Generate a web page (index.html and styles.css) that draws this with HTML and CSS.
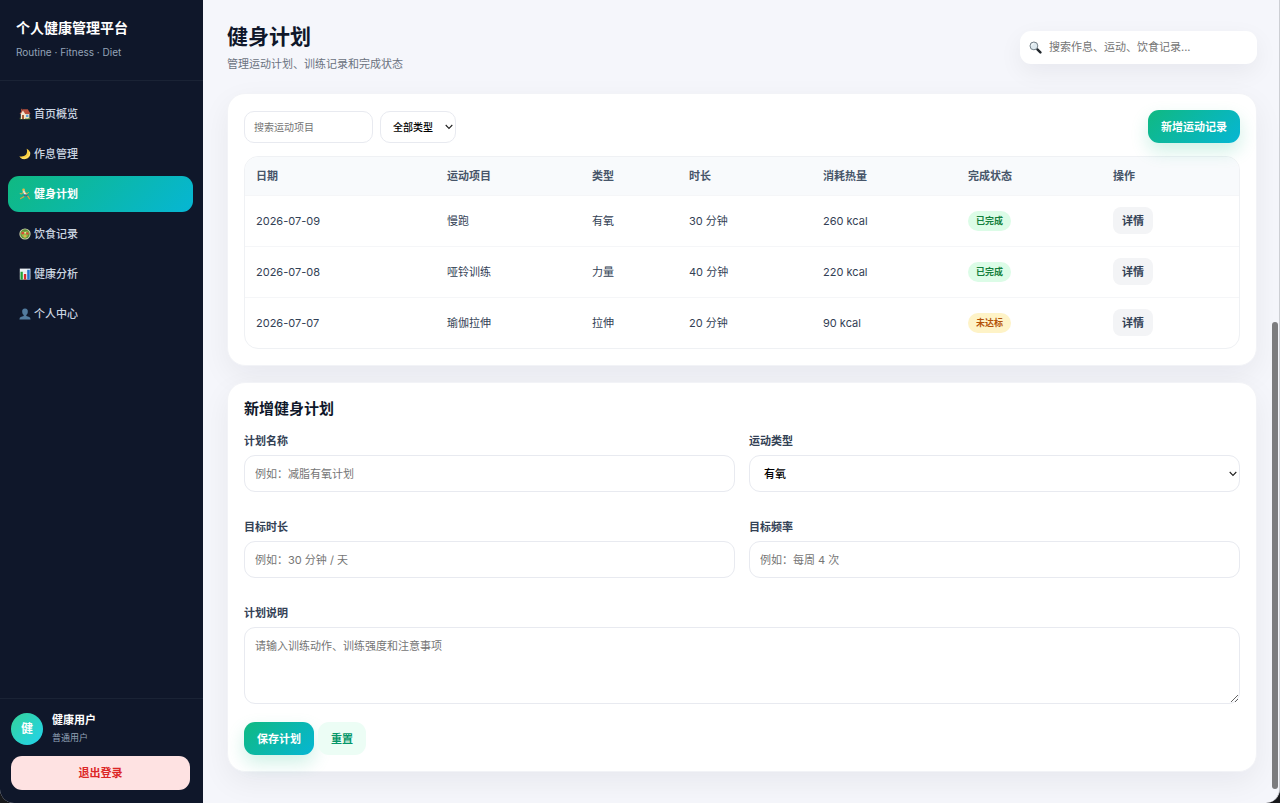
FILE: index.html
```html
<!DOCTYPE html>
<html lang="zh-CN">
<head>
  <meta charset="UTF-8">
  <meta name="viewport" content="width=device-width, initial-scale=1.0">
  <title>健身计划 - 个人健康管理平台</title>
  <link rel="stylesheet" href="styles.css">
</head>
<body>
  <div class="app">
    <aside class="sidebar">
      <div class="brand">
        <div class="brand-title">个人健康管理平台</div>
        <div class="brand-sub">Routine · Fitness · Diet</div>
      </div>

      <nav class="nav">
        <a href="#home" class="nav-item">
          <svg class="nav-icon" viewBox="0 0 12 12">
            <rect x="2" y="5" width="8.4" height="6" fill="#f0dfc0"/>
            <path d="M0.6 6 L3.8 1.2 H8.8 L11.6 6 Z" fill="#b9503c"/>
            <rect x="2" y="0.8" width="1.4" height="3" fill="#9b4a3b"/>
            <path d="M3.9 2.6 L1.8 6 V11 H6.2 V6 Z" fill="#f3e4cd"/>
            <rect x="3" y="7" width="2" height="4" fill="#a65f35"/>
            <rect x="7" y="6.7" width="2.4" height="2.3" fill="#5aa5d8"/>
            <path d="M0.8 11.3 H11.4 V9.8 H9.8 L9.2 10.5 H6 V11 H2 L1.7 9.8 H0.8 Z" fill="#668d35"/>
          </svg>
          <span>首页概览</span>
        </a>
        <a href="#routine" class="nav-item">
          <svg class="nav-icon" viewBox="0 0 12 12">
            <path d="M7.6 0.8 C13 3.1 12.2 9.8 6.8 11 C4 11.6 1.4 10.4 0.4 8.2 C6.2 9.6 9.3 5.6 7.6 0.8 Z" fill="#f8ce3f"/>
            <path d="M10.6 4 C11 8 8 10.5 3 10.3" fill="none" stroke="#fce98a" stroke-width="0.8"/>
          </svg>
          <span>作息管理</span>
        </a>
        <a href="#fitness" class="nav-item active">
          <svg class="nav-icon" viewBox="0 0 12 12">
            <circle cx="4.6" cy="1.9" r="1.4" fill="#e9b94d"/>
            <path d="M4.8 3.6 L6.8 6.6" stroke="#e7edf0" stroke-width="2.2" stroke-linecap="round"/>
            <path d="M4.4 4 L2.6 6 L1.2 5.6 M6 4.4 L8 5.6 L9.4 4.6" fill="none" stroke="#e5ad49" stroke-width="1" stroke-linecap="round"/>
            <path d="M6.6 6.8 L4.8 8.8 L1.6 10.6 M6.8 6.8 L9 8.4 L10.4 10.8" fill="none" stroke="#d89f47" stroke-width="1.2" stroke-linecap="round"/>
            <path d="M6.4 6.6 L5.2 8.2 M7 6.8 L8.4 8" stroke="#3b6b8e" stroke-width="1.7"/>
          </svg>
          <span>健身计划</span>
        </a>
        <a href="#diet" class="nav-item">
          <svg class="nav-icon" viewBox="0 0 12 12">
            <circle cx="6" cy="6" r="5.6" fill="#d2d5ae"/>
            <circle cx="6" cy="6" r="4.7" fill="#5d9139"/>
            <path d="M2 5 Q4 2 6 4 Q8 1.5 10 5 L8 9 Q5 11 3 8 Z" fill="#8fbd48"/>
            <circle cx="3.8" cy="5.2" r="1.4" fill="#d64d35"/>
            <circle cx="8.4" cy="5.5" r="1.3" fill="#d64d35"/>
            <circle cx="6" cy="8.3" r="1.3" fill="#e4ad50"/>
            <circle cx="6.2" cy="4.7" r="0.9" fill="#efe2a0"/>
          </svg>
          <span>饮食记录</span>
        </a>
        <a href="#analysis" class="nav-item">
          <svg class="nav-icon" viewBox="0 0 12 12">
            <rect x="0.8" y="0.6" width="10.6" height="11" fill="#edf2f6"/>
            <path d="M0.8 4 H11.4 M0.8 8 H11.4" stroke="#c4ced6" stroke-width="0.4"/>
            <rect x="1.5" y="3.8" width="2.3" height="7.8" fill="#21a838"/>
            <rect x="4.9" y="6" width="2.3" height="5.6" fill="#d72d31"/>
            <rect x="8.2" y="1.8" width="2.5" height="9.8" fill="#2374ce"/>
          </svg>
          <span>健康分析</span>
        </a>
        <a href="#profile" class="nav-item">
          <svg class="nav-icon" viewBox="0 0 12 12">
            <path d="M6 0.6 C8.2 0.6 9 2 8.8 4 C8.7 5.5 8 6.5 7.3 7.1 V8 C9.5 8.5 11.4 8.8 11.6 11.4 H0.4 C0.6 8.8 2.5 8.5 4.7 8 V7.1 C4 6.5 3.3 5.5 3.2 4 C3 2 3.8 0.6 6 0.6 Z" fill="#527b9e"/>
          </svg>
          <span>个人中心</span>
        </a>
      </nav>

      <div class="sidebar-footer">
        <div class="user">
          <div class="avatar">健</div>
          <div>
            <div class="user-name">健康用户</div>
            <div class="user-role">普通用户</div>
          </div>
        </div>
        <button type="button" class="logout">退出登录</button>
      </div>
    </aside>

    <main class="main">
      <header class="page-header">
        <div>
          <h1>健身计划</h1>
          <p>管理运动计划、训练记录和完成状态</p>
        </div>
        <label class="search">
          <svg class="search-icon" viewBox="0 0 13 13" aria-hidden="true">
            <path d="M7.6 7.6 L11.4 11.4" stroke="#22282d" stroke-width="2.4" stroke-linecap="round"/>
            <circle cx="4.9" cy="4.9" r="3.9" fill="#dfeaf0" stroke="#68747d" stroke-width="0.9"/>
            <path d="M2.6 4.7 C2.8 3.4 3.7 2.7 4.9 2.6" fill="none" stroke="#ffffff" stroke-width="0.9"/>
          </svg>
          <input type="text" placeholder="搜索作息、运动、饮食记录..." aria-label="搜索">
        </label>
      </header>

      <section class="card">
        <div class="toolbar">
          <div class="filters">
            <input type="text" class="filter-input" placeholder="搜索运动项目" aria-label="搜索运动项目">
            <select class="filter-select" aria-label="类型">
              <option>全部类型</option>
              <option>有氧</option>
              <option>力量</option>
              <option>拉伸</option>
            </select>
          </div>
          <button type="button" class="btn btn-primary">新增运动记录</button>
        </div>

        <div class="table-wrap">
          <table>
            <thead>
              <tr>
                <th class="col-date">日期</th>
                <th class="col-name">运动项目</th>
                <th class="col-type">类型</th>
                <th class="col-time">时长</th>
                <th class="col-kcal">消耗热量</th>
                <th class="col-status">完成状态</th>
                <th class="col-action">操作</th>
              </tr>
            </thead>
            <tbody>
              <tr>
                <td>2026-07-09</td>
                <td>慢跑</td>
                <td>有氧</td>
                <td>30 分钟</td>
                <td>260 kcal</td>
                <td><span class="badge badge-success">已完成</span></td>
                <td><button type="button" class="btn-detail">详情</button></td>
              </tr>
              <tr>
                <td>2026-07-08</td>
                <td>哑铃训练</td>
                <td>力量</td>
                <td>40 分钟</td>
                <td>220 kcal</td>
                <td><span class="badge badge-success">已完成</span></td>
                <td><button type="button" class="btn-detail">详情</button></td>
              </tr>
              <tr>
                <td>2026-07-07</td>
                <td>瑜伽拉伸</td>
                <td>拉伸</td>
                <td>20 分钟</td>
                <td>90 kcal</td>
                <td><span class="badge badge-warning">未达标</span></td>
                <td><button type="button" class="btn-detail">详情</button></td>
              </tr>
            </tbody>
          </table>
        </div>
      </section>

      <section class="card">
        <h2>新增健身计划</h2>
        <form>
          <div class="form-grid">
            <div class="field">
              <label for="plan-name">计划名称</label>
              <input type="text" id="plan-name" placeholder="例如：减脂有氧计划">
            </div>
            <div class="field">
              <label for="plan-type">运动类型</label>
              <select id="plan-type">
                <option>有氧</option>
                <option>力量</option>
                <option>拉伸</option>
              </select>
            </div>
            <div class="field">
              <label for="plan-duration">目标时长</label>
              <input type="text" id="plan-duration" placeholder="例如：30 分钟 / 天">
            </div>
            <div class="field">
              <label for="plan-frequency">目标频率</label>
              <input type="text" id="plan-frequency" placeholder="例如：每周 4 次">
            </div>
            <div class="field field-full">
              <label for="plan-desc">计划说明</label>
              <textarea id="plan-desc" placeholder="请输入训练动作、训练强度和注意事项"></textarea>
            </div>
          </div>
          <div class="form-actions">
            <button type="button" class="btn btn-primary">保存计划</button>
            <button type="reset" class="btn btn-light">重置</button>
          </div>
        </form>
      </section>
    </main>
    <div class="scroll-thumb"></div>
  </div>
</body>
</html>
```
FILE: styles.css
```css
* {
  margin: 0;
  padding: 0;
  box-sizing: border-box;
}

html {
  background: #17181b;
}

body {
  font-family: Inter, "Noto Sans CJK SC", sans-serif;
  font-size: 11px;
  line-height: 16px;
  color: #334155;
}

button,
input,
select,
textarea {
  font-family: inherit;
  font-size: 11px;
  line-height: 16px;
}

button {
  border: none;
  cursor: pointer;
}

input,
select,
textarea {
  border: 1px solid #e8eaf0;
  background: #fff;
  outline: none;
}

input::placeholder,
textarea::placeholder {
  color: #757575;
}

.app {
  position: relative;
  display: flex;
  min-height: 100vh;
  background: #f5f6fb;
  border-right: 1px solid #cdcfd4;
  border-radius: 0 0 14px 14px;
  overflow: hidden;
}

/* Sidebar */
.sidebar {
  display: flex;
  flex-direction: column;
  flex: 0 0 203px;
  height: 100vh;
  background: #0f172a;
  color: #cbd5e1;
}

.brand {
  padding: 18px 16px 20px;
  border-bottom: 1px solid #1a2335;
}

.brand-title {
  color: #fff;
  font-size: 14px;
  font-weight: 700;
  line-height: 20px;
}

.brand-sub {
  margin-top: 6px;
  color: #94a3b8;
  font-size: 10px;
}

.nav {
  flex: 1;
  display: flex;
  flex-direction: column;
  gap: 4px;
  padding: 15px 10px 15px 8px;
}

.nav-item {
  display: flex;
  align-items: center;
  gap: 3px;
  height: 36px;
  padding: 0 11px;
  border-radius: 11px;
  color: #cbd5e1;
  text-decoration: none;
  font-weight: 500;
}

.nav-item.active {
  background: linear-gradient(135deg, #10b981, #06b6d4);
  color: #fff;
  font-weight: 700;
}

.nav-icon {
  width: 12px;
  height: 12px;
}

.sidebar-footer {
  padding: 13px 13px 13px 11px;
  border-top: 1px solid #1a2335;
}

.user {
  display: flex;
  align-items: center;
  gap: 9px;
  margin-bottom: 10px;
}

.avatar {
  display: flex;
  align-items: center;
  justify-content: center;
  width: 32px;
  height: 32px;
  border-radius: 50%;
  background: linear-gradient(135deg, #34d399, #22d3ee);
  color: #fff;
  font-size: 12px;
  font-weight: 700;
}

.user-name {
  color: #fff;
  font-weight: 700;
}

.user-role {
  margin-top: 2px;
  color: #94a3b8;
  font-size: 9px;
}

.logout {
  width: 100%;
  height: 34px;
  border-radius: 11px;
  background: #fee2e2;
  color: #dc2626;
  font-weight: 700;
}

/* Main */
.main {
  flex: 1;
  min-width: 0;
  padding: 22px 22px 0 24px;
}

.page-header {
  display: flex;
  align-items: center;
  justify-content: space-between;
  margin-bottom: 21px;
}

h1 {
  color: #0f172a;
  font-size: 21px;
  font-weight: 700;
  line-height: 30px;
}

.page-header p {
  margin-top: 4px;
  color: #6b7280;
}

.search {
  display: flex;
  align-items: center;
  gap: 7px;
  width: 237px;
  height: 33px;
  padding: 0 9px;
  border-radius: 11px;
  background: #fff;
  box-shadow: 0 8px 24px rgba(15, 23, 42, 0.06);
}

.search-icon {
  flex: none;
  width: 13px;
  height: 13px;
}

.search input {
  flex: 1;
  min-width: 0;
  border: none;
}

.card {
  margin-bottom: 16px;
  padding: 16px;
  border: 1px solid #f2f3f7;
  border-radius: 18px;
  background: #fff;
  box-shadow: 0 10px 30px rgba(15, 23, 42, 0.06);
}

.toolbar {
  display: flex;
  align-items: center;
  justify-content: space-between;
  margin-bottom: 13px;
}

.filters {
  display: flex;
  gap: 7px;
}

.filter-input {
  width: 129px;
  height: 32px;
  padding: 0 9px;
  border-radius: 10px;
  font-size: 10px;
}

select {
  appearance: none;
  color: #000;
  font-weight: 500;
  background: #fff url("data:image/svg+xml,%3Csvg xmlns='http://www.w3.org/2000/svg' width='8' height='6' viewBox='0 0 8 6'%3E%3Cpath d='M0.7 1 L4 4.4 L7.3 1' fill='none' stroke='%23222' stroke-width='1.1'/%3E%3C/svg%3E") no-repeat right 2px center;
}

.filter-select {
  width: 76px;
  height: 32px;
  padding: 0 12px;
  border-radius: 10px;
  font-size: 10px;
}

.btn {
  height: 33px;
  padding: 0 13px;
  border-radius: 11px;
  font-weight: 700;
}

.btn-primary {
  background: linear-gradient(135deg, #10b981, #06b6d4);
  box-shadow: 0 8px 18px rgba(16, 185, 129, 0.2);
  color: #fff;
}

.btn-light {
  background: #ecfdf5;
  color: #059669;
}

/* Table */
.table-wrap {
  border: 1px solid #eff1f4;
  border-radius: 14px;
  overflow: hidden;
}

table {
  width: 100%;
  table-layout: fixed;
  border-collapse: collapse;
}

th,
td {
  padding: 0 11px;
  border-bottom: 1px solid #f5f6f8;
  text-align: left;
}

th {
  height: 38px;
  background: #f8fafc;
  color: #475569;
  font-weight: 700;
}

td {
  height: 51px;
}

tbody tr:last-child td {
  border-bottom: none;
}

/* Column widths share out any spare room in proportion */
.col-date { width: 191px; }
.col-name { width: 145px; }
.col-type { width: 97px; }
.col-time { width: 134px; }
.col-kcal { width: 145px; }
.col-status { width: 145px; }
.col-action { width: 137px; }

.badge {
  display: inline-block;
  padding: 2px 8px;
  border-radius: 10px;
  font-size: 9px;
  font-weight: 700;
}

.badge-success {
  background: #dcfce7;
  color: #15803d;
}

.badge-warning {
  background: #fef3c7;
  color: #b45309;
}

.btn-detail {
  height: 27px;
  padding: 0 9px;
  border-radius: 8px;
  background: #f3f4f6;
  color: #334155;
  font-weight: 700;
}

/* Form */
h2 {
  margin-bottom: 14px;
  color: #0f172a;
  font-size: 15px;
  font-weight: 700;
  line-height: 20px;
}

.form-grid {
  display: grid;
  grid-template-columns: 1fr 1fr;
  column-gap: 14px;
  row-gap: 27px;
}

.field {
  display: flex;
  flex-direction: column;
  gap: 6px;
}

.field-full {
  grid-column: 1 / -1;
}

.field label {
  color: #334155;
  font-weight: 700;
}

.field input,
.field select {
  width: 100%;
  height: 37px;
  padding: 0 10px;
  border-radius: 11px;
}

.field select {
  padding: 0 14px;
}

.field textarea {
  width: 100%;
  height: 77px;
  padding: 10px;
  border-radius: 11px;
  resize: vertical;
}

.form-actions {
  display: flex;
  gap: 4px;
  margin-top: 18px;
}

.scroll-thumb {
  position: absolute;
  right: 1px;
  bottom: 14px;
  width: 6px;
  height: 467px;
  border-radius: 3px;
  background: #7c7c7e;
}
```
